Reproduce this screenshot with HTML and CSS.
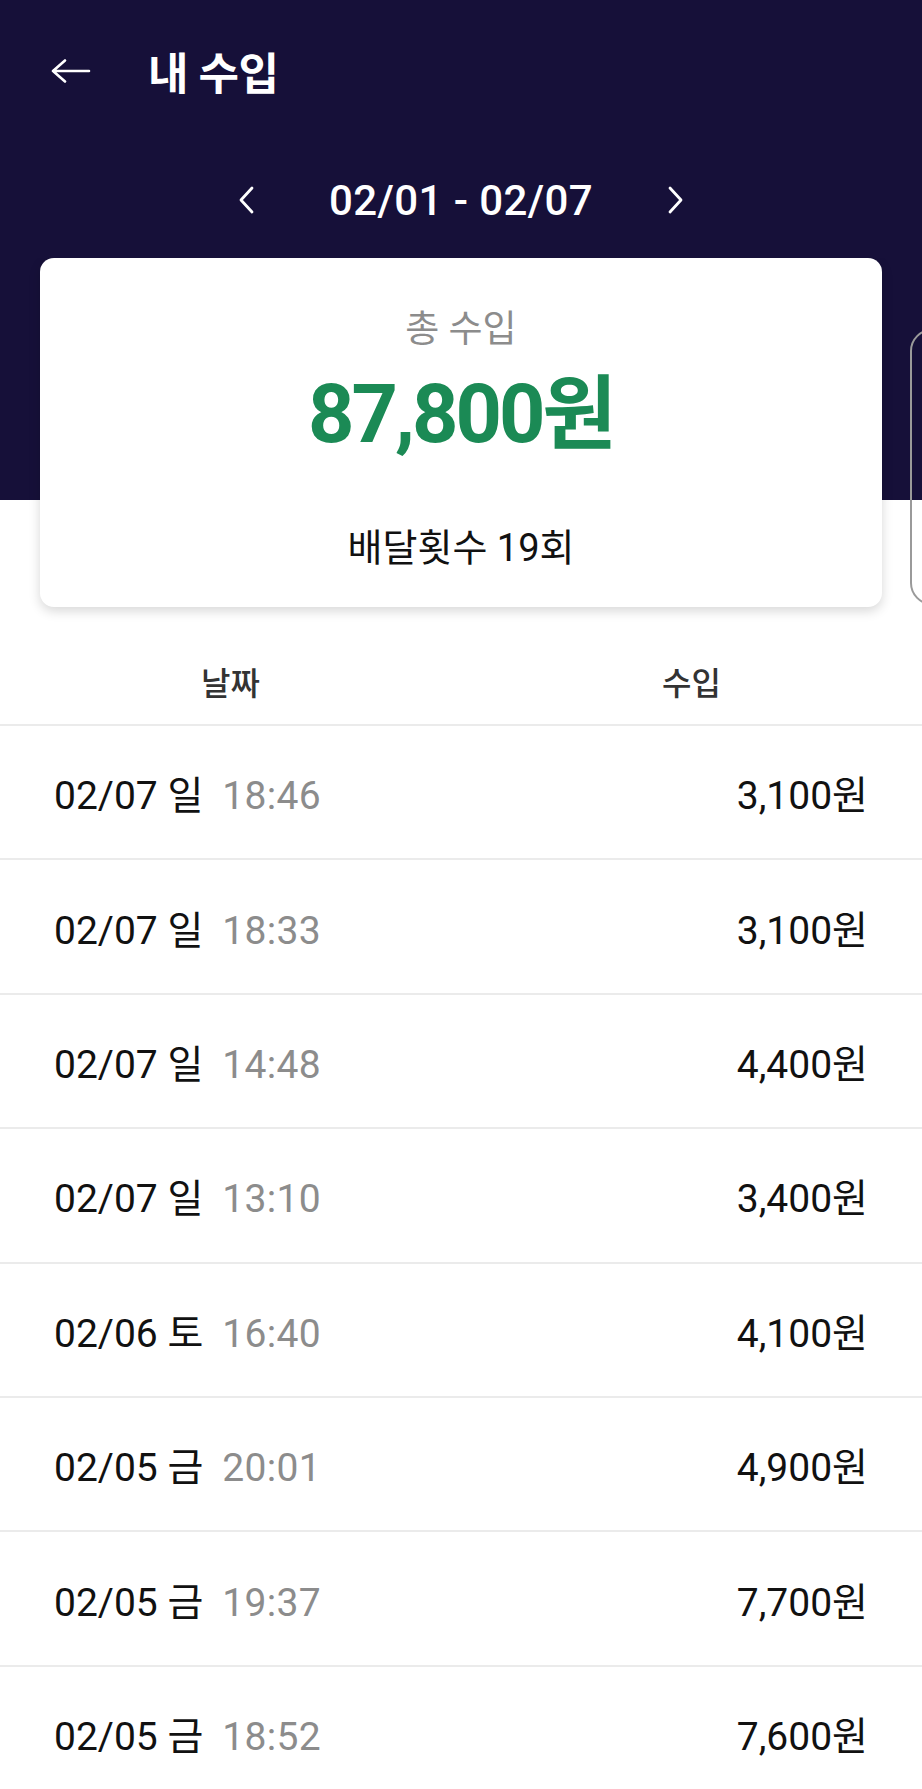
FILE: index.html
```html
<!DOCTYPE html>
<html>
<head>
	<title>내 수입</title>
	<link rel="stylesheet" href="styles.css">
</head>
<body>
	<div class="top">
		<div class="app-bar">
			<svg class="back-icon" width="40" height="24" viewBox="0 0 40 24">
				<path d="M2 12 H38 M14 1.5 L2 12 L14 22.5" fill="none" stroke="#fff" stroke-width="2.6" stroke-linecap="round" stroke-linejoin="round"/>
			</svg>
			<h1 class="title">내 수입</h1>
		</div>

		<div class="week-nav">
			<svg width="18" height="28" viewBox="0 0 18 28">
				<path d="M15 2 L4 14 L15 26" fill="none" stroke="#fff" stroke-width="2.8" stroke-linecap="round" stroke-linejoin="round"/>
			</svg>
			<span class="week-label">02/01 - 02/07</span>
			<svg width="18" height="28" viewBox="0 0 18 28">
				<path d="M3 2 L14 14 L3 26" fill="none" stroke="#fff" stroke-width="2.8" stroke-linecap="round" stroke-linejoin="round"/>
			</svg>
		</div>

		<div class="carousel">
			<div class="summary-card">
				<div class="summary-label">총 수입</div>
				<div class="summary-amount">87,800원</div>
				<div class="summary-count">배달횟수 19회</div>
			</div>
			<div class="next-card"></div>
		</div>
	</div>

	<div class="list-head">
		<div class="list-head-cell">날짜</div>
		<div class="list-head-cell">수입</div>
	</div>

	<div id="income-list"></div>

	<script>
		const incomes = [
			{ date: '02/07 일', time: '18:46', amount: '3,100원' },
			{ date: '02/07 일', time: '18:33', amount: '3,100원' },
			{ date: '02/07 일', time: '14:48', amount: '4,400원' },
			{ date: '02/07 일', time: '13:10', amount: '3,400원' },
			{ date: '02/06 토', time: '16:40', amount: '4,100원' },
			{ date: '02/05 금', time: '20:01', amount: '4,900원' },
			{ date: '02/05 금', time: '19:37', amount: '7,700원' },
			{ date: '02/05 금', time: '18:52', amount: '7,600원' }
		];

		const list = document.getElementById('income-list');
		incomes.forEach(item => {
			const row = document.createElement('div');
			row.className = 'income-row';
			row.innerHTML = `
				<div class="income-when">${item.date}<span class="income-time">${item.time}</span></div>
				<div class="income-amount">${item.amount}</div>`;
			list.appendChild(row);
		});
	</script>
</body>
</html>
```

FILE: styles.css
```css
body {
	margin: 0;
	background-color: #fff;
	font-family: Roboto, "Noto Sans CJK KR", sans-serif;
	color: #111;
	overflow: hidden;
}
.top {
	background: linear-gradient(#161039 500px, #fff 500px);
}
.app-bar {
	height: 142px;
	display: flex;
	align-items: center;
	padding-left: 51px;
	gap: 57px;
}
.back-icon {
	display: block;
}
.title {
	margin: 0;
	color: #fff;
	font-size: 44px;
	font-weight: 700;
	letter-spacing: -0.5px;
}
.week-nav {
	height: 116px;
	display: flex;
	align-items: center;
	justify-content: center;
	gap: 74px;
}
.week-nav svg {
	display: block;
}
.week-label {
	color: #fff;
	font-size: 42px;
	font-weight: 500;
	letter-spacing: 0.4px;
}
.carousel {
	display: flex;
	align-items: flex-start;
	gap: 28px;
	padding: 0 0 22px 40px;
	overflow: hidden;
}
.summary-card {
	flex: 0 0 842px;
	height: 349px;
	box-sizing: border-box;
	padding-top: 50px;
	background-color: #fff;
	border-radius: 14px;
	box-shadow: 0 4px 12px rgba(0,0,0,0.16);
	text-align: center;
}
.summary-label {
	line-height: 44px;
	font-size: 37px;
	color: #8c8c8c;
}
.summary-amount {
	margin-top: 15px;
	line-height: 96px;
	font-size: 81px;
	font-weight: 700;
	letter-spacing: -3px;
	color: #1b8a55;
}
.summary-count {
	margin-top: 63px;
	line-height: 44px;
	font-size: 38px;
	color: #111;
}
.next-card {
	flex: 0 0 300px;
	height: 272px;
	margin-top: 71px;
	border: 2px solid #9a9a9a;
	border-radius: 22px;
}
.list-head {
	margin-top: 8px;
	height: 87px;
	display: grid;
	grid-template-columns: 1fr 1fr;
	align-items: center;
	border-bottom: 2px solid #ebebeb;
}
.list-head-cell {
	text-align: center;
	font-size: 32px;
	font-weight: 500;
	color: #333;
}
.income-row {
	height: 132.4px;
	display: flex;
	align-items: center;
	justify-content: space-between;
	padding: 0 54px 0 54px;
	border-bottom: 2px solid #ebebeb;
	font-size: 39px;
}
.income-time {
	margin-left: 19px;
	color: #8c8c8c;
	letter-spacing: 0.3px;
}
.income-amount {
	color: #111;
}
```
